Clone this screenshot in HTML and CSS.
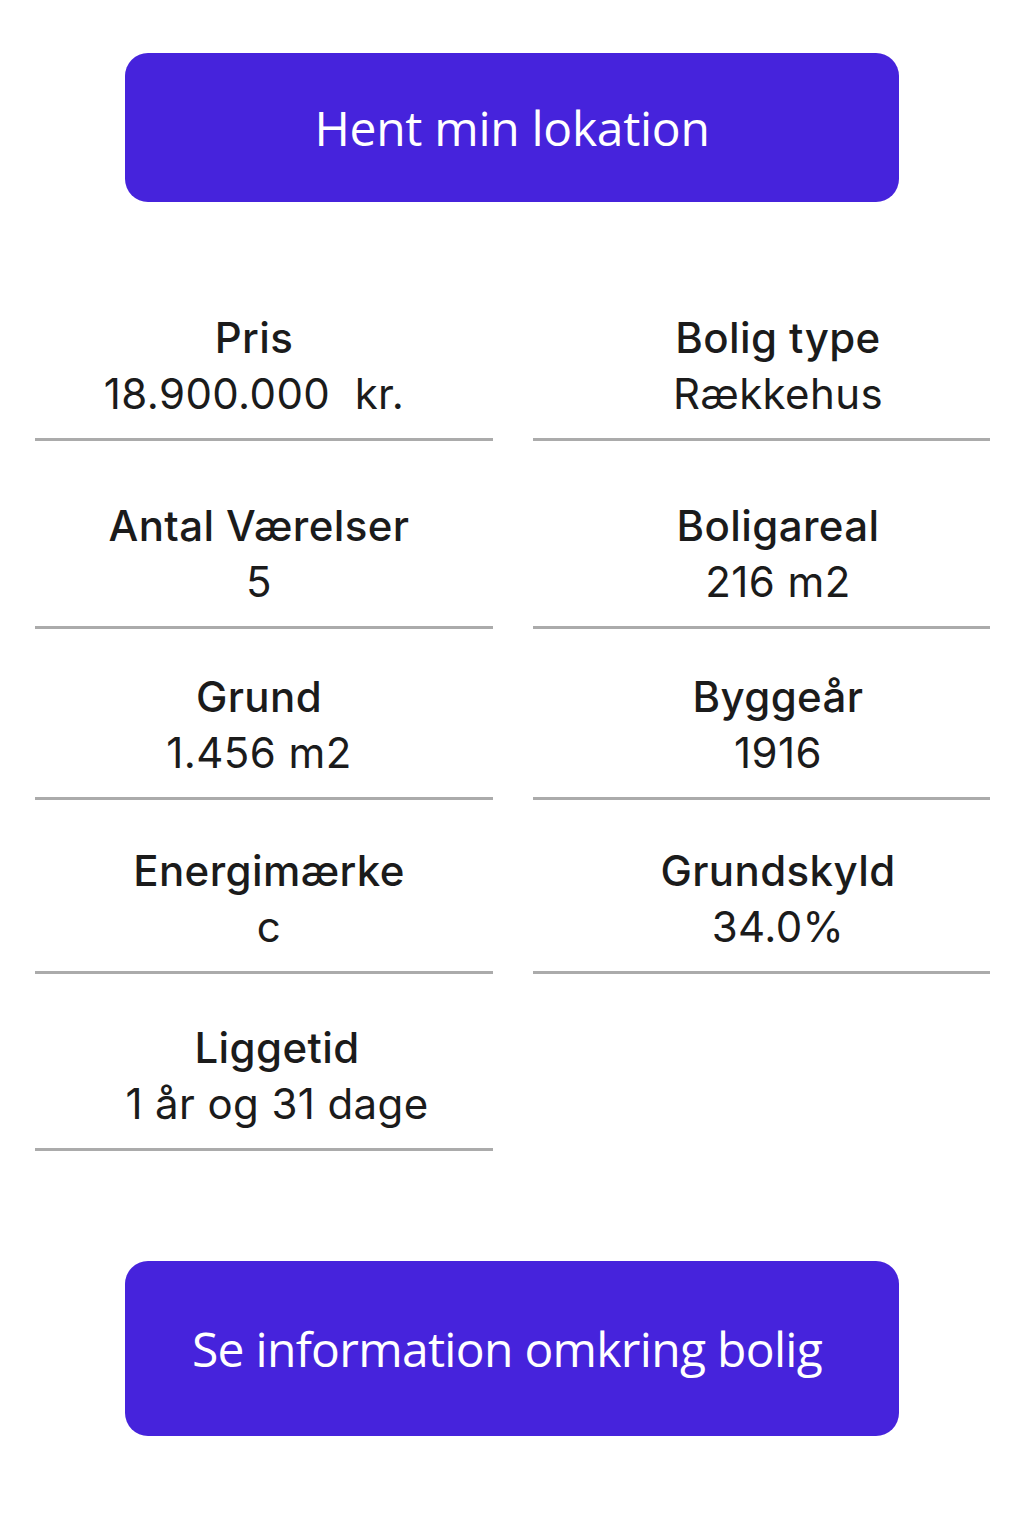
FILE: index.html
```html
<!DOCTYPE html>
<html lang="da">
<head>
<meta charset="utf-8">
<title>Bolig</title>
<link rel="stylesheet" href="styles.css">
</head>
<body>
<main class="page">
  <button class="btn btn-top">Hent min lokation</button>

  <section class="grid">
    <div class="cell left shift-l1"><div class="label">Pris</div><div class="value">18.900.000&nbsp; kr.</div></div>
    <div class="cell right"><div class="label">Bolig type</div><div class="value">Rækkehus</div></div>

    <div class="cell left shift-l2"><div class="label">Antal Værelser</div><div class="value">5</div></div>
    <div class="cell right"><div class="label">Boligareal</div><div class="value">216 m2</div></div>

    <div class="cell left shift-l2"><div class="label">Grund</div><div class="value">1.456 m2</div></div>
    <div class="cell right"><div class="label">Byggeår</div><div class="value">1916</div></div>

    <div class="cell left shift-r2"><div class="label">Energimærke</div><div class="value">c</div></div>
    <div class="cell right"><div class="label">Grundskyld</div><div class="value">34.0%</div></div>

    <div class="cell left shift-r1"><div class="label">Liggetid</div><div class="value">1 år og 31 dage</div></div>
  </section>

  <button class="btn btn-bottom">Se information omkring bolig</button>
</main>
</body>
</html>
```
FILE: styles.css
```css
* { box-sizing: border-box; }
html, body { margin: 0; padding: 0; background: #ffffff; }
body { font-family: Inter, "Noto Sans", sans-serif; color: #1b1b1b; }

.page {
  width: 1024px;
  padding: 53px 34px 0 35px;
  display: flex;
  flex-direction: column;
  align-items: flex-start;
}

.btn {
  width: 774px;
  margin-left: 90px;
  border: none;
  border-radius: 23px;
  background: #4623dc;
  color: #ffffff;
  font-family: "Open Sans", "Noto Sans", sans-serif;
  font-weight: 400;
  cursor: pointer;
}

.btn-top {
  height: 149px;
  font-size: 48px;
  letter-spacing: -0.3px;
}

.btn-bottom {
  height: 175px;
  font-size: 48px;
  letter-spacing: -0.7px;
  margin-top: 110px;
  padding-right: 16px;
}

.grid {
  width: 955px;
  margin-top: 51px;
  display: grid;
  grid-template-columns: 458px 457px;
  column-gap: 40px;
  grid-template-rows: 188px 188px 171px 174px 177px;
}

.cell {
  display: flex;
  flex-direction: column;
  justify-content: flex-end;
  align-items: center;
  text-align: center;
  padding-bottom: 16px;
  border-bottom: 3px solid #ababab;
  font-size: 42px;
  line-height: 56px;
  letter-spacing: 0.4px;
}

.cell.right { padding-left: 33px; }
.shift-l1 { padding-right: 20px; }
.shift-l2 { padding-right: 10px; }
.shift-r2 { padding-left: 10px; }
.shift-r1 { padding-left: 26px; }

.label { font-weight: 500; }
.value { font-weight: 400; }
```
